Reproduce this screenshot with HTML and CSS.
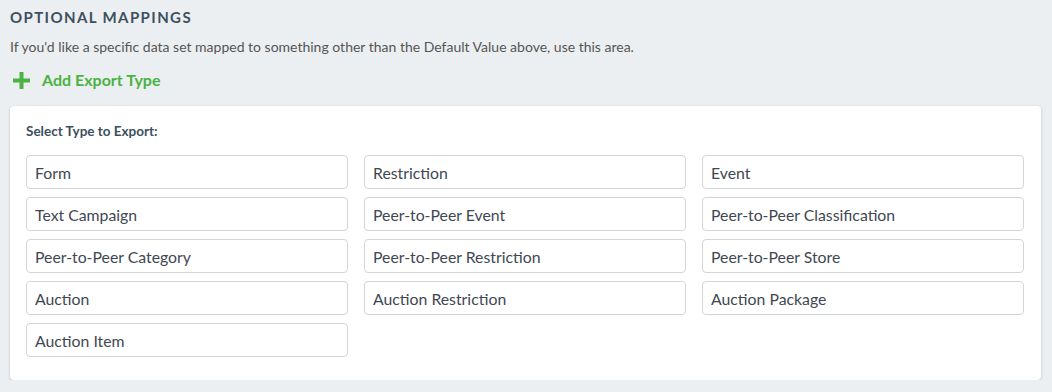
FILE: index.html
```html
<!DOCTYPE html>
<html lang="en">
<head>
    <meta charset="UTF-8">
    <title>Optional Mappings</title>
    <link rel="stylesheet" href="styles.css">
</head>
<body>
    <div class="section">
        <h2 class="section-title">Optional Mappings</h2>
        <p class="section-desc">If you'd like a specific data set mapped to something other than the Default Value above, use this area.</p>
        <a class="add-link" href="#">
            <svg class="add-icon" width="17" height="17" viewBox="0 0 17 17"><rect x="6.5" y="0" width="4" height="17" fill="currentColor"/><rect x="0" y="6.5" width="17" height="4" fill="currentColor"/></svg>
            Add Export Type
        </a>
        <div class="card">
            <div class="card-label">Select Type to Export:</div>
            <div class="type-grid">
                <div class="type-option">Form</div>
                <div class="type-option">Restriction</div>
                <div class="type-option">Event</div>
                <div class="type-option">Text Campaign</div>
                <div class="type-option">Peer-to-Peer Event</div>
                <div class="type-option">Peer-to-Peer Classification</div>
                <div class="type-option">Peer-to-Peer Category</div>
                <div class="type-option">Peer-to-Peer Restriction</div>
                <div class="type-option">Peer-to-Peer Store</div>
                <div class="type-option">Auction</div>
                <div class="type-option">Auction Restriction</div>
                <div class="type-option">Auction Package</div>
                <div class="type-option">Auction Item</div>
            </div>
        </div>
    </div>
</body>
</html>
```
FILE: styles.css
```css
body {
    margin: 0;
    background: #eceff1;
    font-family: Lato, "Open Sans", sans-serif;
    color: #444;
}
.section {
    padding: 8px 11px 0 10px;
}
.section-title {
    margin: 0;
    font-size: 15px;
    font-weight: bold;
    letter-spacing: 1.4px;
    text-transform: uppercase;
    color: #3d4f60;
    line-height: 18px;
}
.section-desc {
    margin: 12px 0 0;
    font-size: 14px;
    color: #555;
    line-height: 18px;
}
.add-link {
    display: flex;
    align-items: center;
    gap: 12px;
    margin: 15px 0 0 3px;
    font-size: 16px;
    font-weight: bold;
    color: #4bb244;
    text-decoration: none;
    line-height: 18px;
}
.add-icon {
    display: block;
}
.card {
    margin-top: 17px;
    background: #fff;
    border-radius: 4px;
    box-shadow: 0 1px 3px rgba(0, 0, 0, 0.2);
    padding: 17px 17px 23px 16px;
}
.card-label {
    font-size: 13.5px;
    font-weight: bold;
    color: #3d4f60;
    line-height: 16px;
}
.type-grid {
    margin-top: 16px;
    display: grid;
    grid-template-columns: repeat(3, 1fr);
    gap: 8px 16px;
}
.type-option {
    height: 34px;
    box-sizing: border-box;
    border: 1px solid #d3d6d9;
    border-radius: 4px;
    padding: 0 8px;
    display: flex;
    align-items: center;
    font-size: 15.8px;
    color: #3f4852;
}
```
